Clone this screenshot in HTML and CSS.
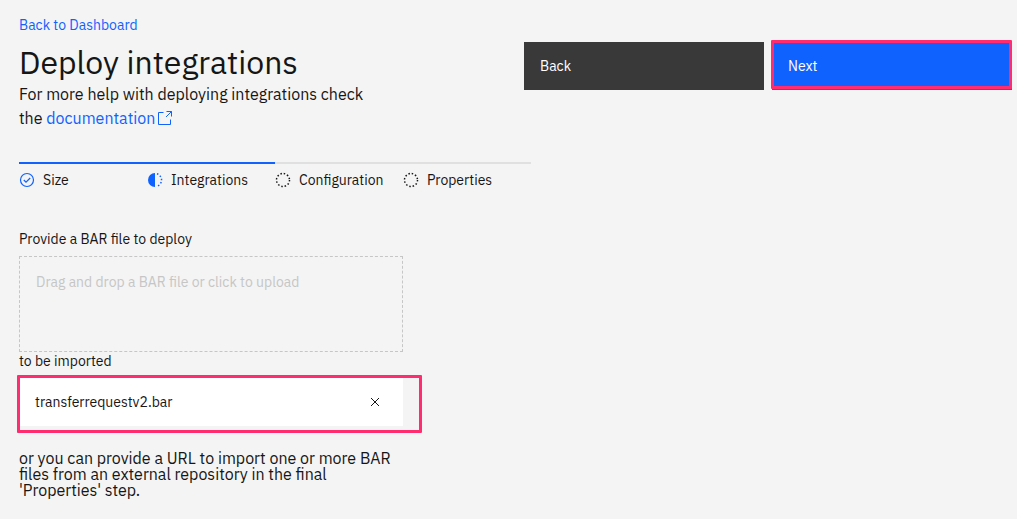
FILE: index.html
```html
<!DOCTYPE html>
<html lang="en">
<head>
<meta charset="utf-8">
<meta name="viewport" content="width=device-width, initial-scale=1">
<title>Deploy integrations</title>
<link rel="stylesheet" href="styles.css">
</head>
<body>
<main class="page">
  <header class="header">
    <div class="intro">
      <a class="link back-link" href="#">Back to Dashboard</a>
      <h1 class="title">Deploy integrations</h1>
      <p class="lead">For more help with deploying integrations check the <a class="link" href="#">documentation<svg class="launch" viewBox="0 0 16 16" aria-hidden="true"><path d="M6.500 2.500h-5v12h12v-5M9.500 1.500h5v5M14.500 1.500 9 7"/></svg></a></p>
    </div>
    <div class="actions">
      <button class="button button-secondary" type="button">Back</button>
      <button class="button button-primary highlight" type="button">Next</button>
    </div>
  </header>

  <ol class="steps">
    <li class="step step-done">
      <svg class="step-icon" viewBox="0 0 16 16" aria-hidden="true"><circle cx="8" cy="8" r="6.500"/><path d="M4.800 8 7 10.200l4.200-4.200"/></svg>
      <span>Size</span>
    </li>
    <li class="step step-done" aria-current="step">
      <svg class="step-icon" viewBox="0 0 16 16" aria-hidden="true"><path class="solid" d="M8 1a7 7 0 0 0 0 14z"/><path class="dots" d="M10 1.800a6.500 6.500 0 0 1 0 12.400"/></svg>
      <span>Integrations</span>
    </li>
    <li class="step">
      <svg class="step-icon" viewBox="0 0 16 16" aria-hidden="true"><circle class="dots" cx="8" cy="8" r="6.500"/></svg>
      <span>Configuration</span>
    </li>
    <li class="step">
      <svg class="step-icon" viewBox="0 0 16 16" aria-hidden="true"><circle class="dots" cx="8" cy="8" r="6.500"/></svg>
      <span>Properties</span>
    </li>
  </ol>

  <section class="upload">
    <p class="label">Provide a BAR file to deploy</p>
    <button class="dropzone" type="button">Drag and drop a BAR file or click to upload</button>
    <p class="label">to be imported</p>
    <div class="file-area highlight">
      <div class="file">
        <span>transferrequestv2.bar</span>
        <button class="remove" type="button" aria-label="Remove transferrequestv2.bar"><svg viewBox="0 0 16 16" aria-hidden="true"><path d="m4 4 8 8M12 4l-8 8"/></svg></button>
      </div>
    </div>
    <p class="note">or you can provide a URL to import one or more BAR files from an external repository in the final 'Properties' step.</p>
  </section>
</main>
</body>
</html>
```
FILE: styles.css
```css
* {
  box-sizing: border-box;
}

body {
  margin: 0;
  background: #f4f4f4;
  color: #161616;
  font: 14px/18px "IBM Plex Sans", Roboto, "Liberation Sans", sans-serif;
}

h1, p, ol {
  margin: 0;
  padding: 0;
}

button {
  font: inherit;
  border: 0;
  cursor: pointer;
}

.page {
  padding: 16px 5px 20px 19px;
}

.header {
  display: flex;
  justify-content: space-between;
  gap: 16px;
}

.intro {
  flex: 0 1 360px;
}

.link {
  color: #0f62fe;
  text-decoration: none;
}

.back-link {
  display: block;
}

.title {
  margin-top: 8px;
  font-size: 32px;
  font-weight: 400;
  line-height: 40px;
}

.lead {
  font-size: 16px;
  line-height: 24px;
}

.launch {
  width: 16px;
  height: 16px;
  margin-left: 2px;
  vertical-align: -2px;
  fill: none;
  stroke: currentColor;
}

.actions {
  display: grid;
  flex: 0 1 488px;
  grid-template-columns: 1fr 1fr;
  gap: 8px;
  align-self: flex-start;
  padding-top: 26px;
}

.button {
  height: 48px;
  padding: 0 16px;
  color: #fff;
  text-align: left;
}

.button-secondary {
  background: #393939;
}

.button-primary {
  background: #0f62fe;
}

.highlight {
  position: relative;
}

.highlight::after {
  content: "";
  position: absolute;
  inset: 0;
  border: 3px solid #ff2d6f;
  border-radius: 1px;
  pointer-events: none;
}

.button.highlight::after {
  inset: -2px 0 1px -1px;
}

.steps {
  display: grid;
  grid-template-columns: repeat(4, 1fr);
  max-width: 512px;
  margin-top: 32px;
  list-style: none;
}

.step {
  display: flex;
  align-items: center;
  gap: 8px;
  padding-top: 7px;
  border-top: 2px solid #e0e0e0;
}

.step-done {
  border-color: #0f62fe;
}

.step-icon {
  width: 16px;
  height: 16px;
  fill: none;
  stroke: #161616;
  stroke-width: 1.200;
}

.step-done .step-icon {
  stroke: #0f62fe;
}

.step-icon .solid {
  fill: #0f62fe;
  stroke: none;
}

.step-icon .dots {
  stroke-width: 1.500;
  stroke-dasharray: 1.500 1.900;
}

.upload {
  max-width: 384px;
  margin-top: 41px;
}

.dropzone {
  display: flex;
  align-items: flex-start;
  width: 100%;
  height: 96px;
  margin-top: 8px;
  padding: 16px;
  border: 1px dashed #c6c6c6;
  background: transparent;
  color: #c6c6c6;
  text-align: left;
}

.file-area {
  margin: 5px -19px 0 -2px;
  padding: 3px 19px 7px 2px;
}

.file {
  display: flex;
  align-items: center;
  justify-content: space-between;
  height: 48px;
  padding: 0 16px;
  background: #fff;
}

.remove {
  display: flex;
  padding: 4px;
  background: transparent;
}

.remove svg {
  width: 16px;
  height: 16px;
  fill: none;
  stroke: #161616;
}

.note {
  margin-top: 17px;
  font-size: 16px;
  line-height: 16px;
}
```
